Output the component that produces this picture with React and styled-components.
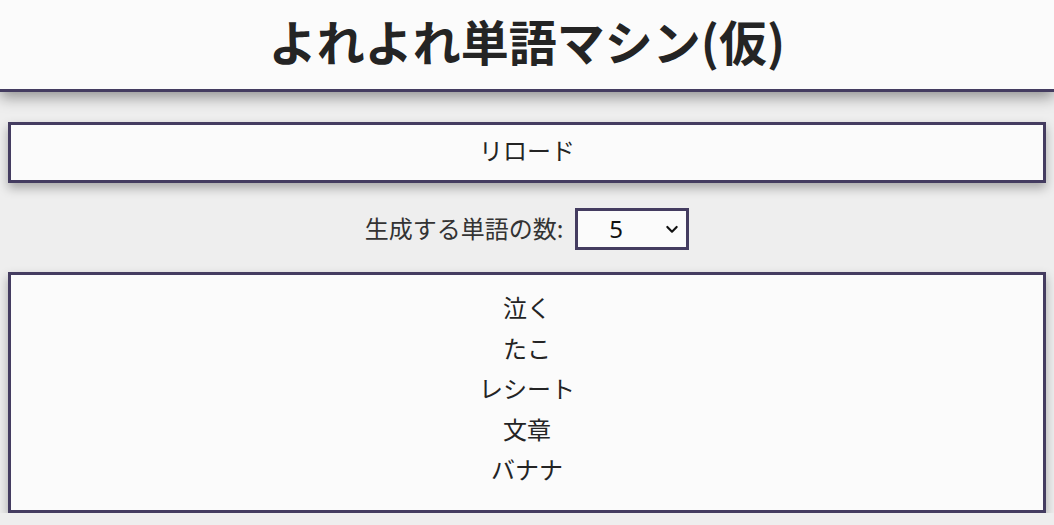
import React, {useState} from 'react';
import styled, {createGlobalStyle} from 'styled-components';

const words = ['泣く', 'たこ', 'レシート', '文章', 'バナナ'];

const Global = createGlobalStyle`
  html, body {
    margin: 0;
    padding: 0;
    background: #eeeeee;
    font-family: "Noto Sans CJK JP", "Noto Sans", sans-serif;
    color: #242424;
  }
`;

const App = () => {
    const [count, setCount] = useState(5);

    return (
        <>
            <Global/>
            <Header>
                <h1>よれよれ単語マシン(仮)</h1>
            </Header>
            <Main>
                <ReloadButton>リロード</ReloadButton>
                <CountRow>
                    <label htmlFor="count">生成する単語の数:</label>
                    <SelectWrap>
                        <select id="count" value={count} onChange={e => setCount(e.target.value)}>
                            {[1, 2, 3, 4, 5, 6, 7, 8, 9, 10].map(n => (
                                <option key={n} value={n}>{n}</option>
                            ))}
                        </select>
                        <svg width="16" height="16" viewBox="0 0 24 24" fill="none" stroke="#111"
                             strokeWidth="3.2" strokeLinecap="round" strokeLinejoin="round">
                            <path d="M5 9l7 7 7-7"/>
                        </svg>
                    </SelectWrap>
                </CountRow>
                <WordList>
                    {words.map(w => <li key={w}>{w}</li>)}
                </WordList>
            </Main>
        </>
    );
};

const Header = styled.header`
  background: #fbfbfb;
  height: 89px;
  border-bottom: 3px solid #443c60;
  box-shadow: 0 5px 14px rgba(0, 0, 0, 0.4);
  display: flex;
  align-items: center;
  justify-content: center;

  h1 {
    margin: 0;
    font-size: 48px;
    font-weight: 700;
    line-height: 1;
    padding-bottom: 10px;
  }
`;

const Main = styled.main`
  padding: 30px 8px 0;
  display: flex;
  flex-direction: column;
  align-items: stretch;
`;

const ReloadButton = styled.button`
  height: 61px;
  background: #fbfbfb;
  border: 3px solid #443c60;
  box-shadow: 0 5px 10px rgba(0, 0, 0, 0.3);
  font-family: inherit;
  font-size: 24px;
  color: #242424;
  cursor: pointer;
  padding: 0 0 6px;
`;

const CountRow = styled.div`
  display: flex;
  align-items: center;
  justify-content: center;
  gap: 12px;
  margin-top: 25px;
  font-size: 24px;

  label {
    color: #333;
    padding-bottom: 4px;
  }
`;

const SelectWrap = styled.div`
  position: relative;

  select {
    appearance: none;
    width: 114px;
    height: 42px;
    background: #fbfbfb;
    border: 3px solid #443c60;
    border-radius: 0;
    font-family: "Noto Sans", sans-serif;
    font-size: 24px;
    color: #111;
    padding: 0 0 2px 31px;
  }

  svg {
    position: absolute;
    right: 9px;
    top: 13px;
    pointer-events: none;
  }
`;

const WordList = styled.ul`
  list-style: none;
  margin: 22px 0 0;
  padding: 12px 0 20px;
  background: #fbfbfb;
  border: 3px solid #443c60;
  box-shadow: 0 5px 10px rgba(0, 0, 0, 0.3);
  text-align: center;
  font-size: 24px;

  li {
    line-height: 40.5px;
  }
`;

export default App;
